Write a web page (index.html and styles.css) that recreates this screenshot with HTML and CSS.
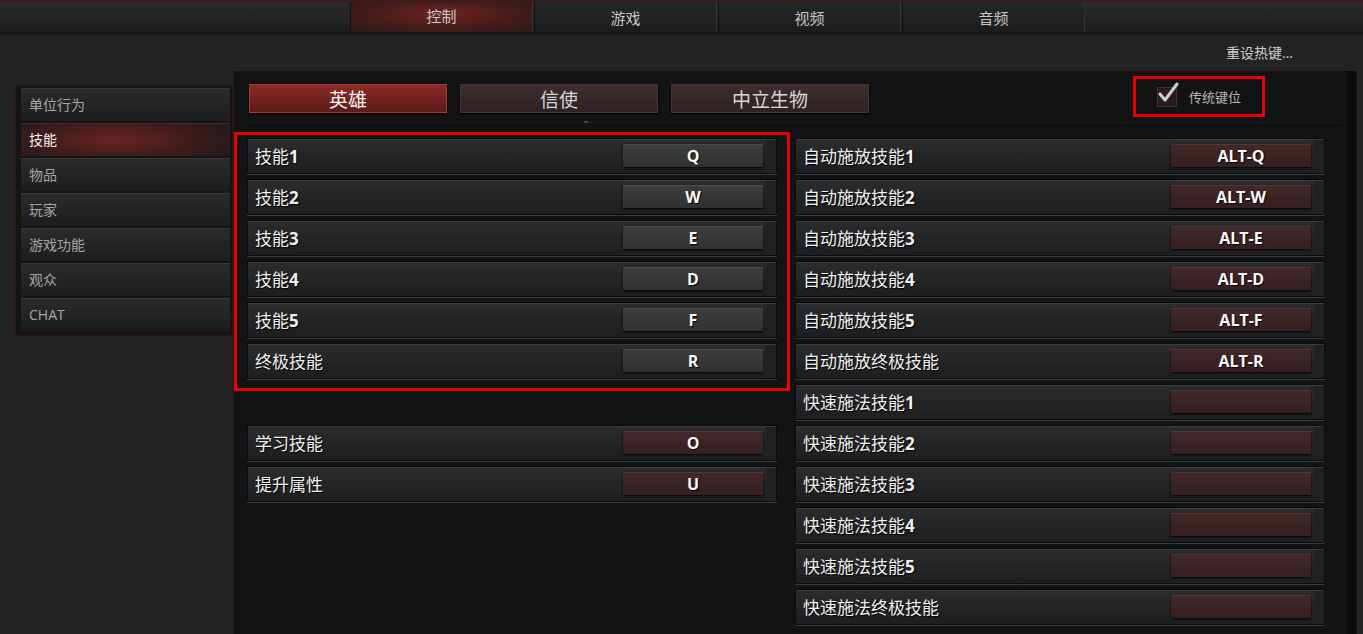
FILE: index.html
```html
<!DOCTYPE html>
<html lang="zh-CN">
<head>
    <meta charset="UTF-8">
    <link rel="stylesheet" href="styles.css">
</head>
<body>
    <div class="topbar">
        <span class="topTab active">控制</span>
        <span class="topTab">游戏</span>
        <span class="topTab">视频</span>
        <span class="topTab">音频</span>
    </div>

    <div class="resetRow">
        <span class="reset">重设热键...</span>
    </div>

    <div class="content">
        <div class="sidebar">
            <a href="#">单位行为</a>
            <a href="#" class="active">技能</a>
            <a href="#">物品</a>
            <a href="#">玩家</a>
            <a href="#">游戏功能</a>
            <a href="#">观众</a>
            <a href="#">CHAT</a>
        </div>

        <div class="panel">
            <div class="subTabs">
                <span class="subTab active">英雄</span>
                <span class="subTab">信使</span>
                <span class="subTab">中立生物</span>

                <div class="legacy">
                    <span class="checkBox">
                        <svg width="26" height="26" viewBox="0 0 26 26">
                            <path d="M5 14 L10 20 L22 4" fill="none" stroke="#cfcfcf" stroke-width="3" stroke-linecap="round" stroke-linejoin="round"/>
                        </svg>
                    </span>
                    <span>传统键位</span>
                </div>
            </div>

            <div class="separator"><i></i></div>

            <div class="columns">
                <div class="column">
                    <div class="highlight">
                        <div class="row"><span class="label">技能<b>1</b></span><span class="key">Q</span></div>
                        <div class="row"><span class="label">技能<b>2</b></span><span class="key">W</span></div>
                        <div class="row"><span class="label">技能<b>3</b></span><span class="key">E</span></div>
                        <div class="row"><span class="label">技能<b>4</b></span><span class="key">D</span></div>
                        <div class="row"><span class="label">技能<b>5</b></span><span class="key">F</span></div>
                        <div class="row"><span class="label">终极技能</span><span class="key">R</span></div>
                    </div>

                    <div class="group">
                        <div class="row"><span class="label">学习技能</span><span class="key red">O</span></div>
                        <div class="row"><span class="label">提升属性</span><span class="key red">U</span></div>
                    </div>
                </div>

                <div class="column">
                    <div class="row"><span class="label">自动施放技能<b>1</b></span><span class="key red">ALT-Q</span></div>
                    <div class="row"><span class="label">自动施放技能<b>2</b></span><span class="key red">ALT-W</span></div>
                    <div class="row"><span class="label">自动施放技能<b>3</b></span><span class="key red">ALT-E</span></div>
                    <div class="row"><span class="label">自动施放技能<b>4</b></span><span class="key red">ALT-D</span></div>
                    <div class="row"><span class="label">自动施放技能<b>5</b></span><span class="key red">ALT-F</span></div>
                    <div class="row"><span class="label">自动施放终极技能</span><span class="key red">ALT-R</span></div>
                    <div class="row"><span class="label">快速施法技能<b>1</b></span><span class="key red"></span></div>
                    <div class="row"><span class="label">快速施法技能<b>2</b></span><span class="key red"></span></div>
                    <div class="row"><span class="label">快速施法技能<b>3</b></span><span class="key red"></span></div>
                    <div class="row"><span class="label">快速施法技能<b>4</b></span><span class="key red"></span></div>
                    <div class="row"><span class="label">快速施法技能<b>5</b></span><span class="key red"></span></div>
                    <div class="row"><span class="label">快速施法终极技能</span><span class="key red"></span></div>
                </div>
            </div>

            <div class="scrollTrack"></div>
        </div>
    </div>
</body>
</html>
```

FILE: styles.css
```css
*{
    padding: 0;
    margin: 0;
    box-sizing: border-box;
}

body{
    width: 1363px;
    height: 634px;
    overflow: hidden;
    background-color: #232323;
    font-family: "Open Sans", "Noto Sans CJK SC", sans-serif;
    color: #ccc;
}

/* 顶部标签 */
.topbar{
    height: 32px;
    display: flex;
    padding-left: 350px;
    gap: 1px;
    border-top: 2px solid #3a1c1c;
    background: linear-gradient(#2b2b2b, #1d1d1d);
    box-shadow: 0 2px 2px #111;
}
.topTab{
    width: 183px;
    display: flex;
    align-items: center;
    justify-content: center;
    font-size: 15px;
    color: #c8c8c8;
    background: linear-gradient(#262728, #1b1c1d);
    border-left: 1px solid #111;
    border-right: 1px solid #333;
}
.topTab.active{
    background: radial-gradient(ellipse at 50% 40%, #6e2420 0%, #4a1c1a 50%, #2a1a1a 100%);
    padding-bottom: 4px;
}

.resetRow{
    height: 38px;
    display: flex;
    justify-content: flex-end;
    padding-right: 70px;
    padding-top: 10px;
}
.reset{
    font-size: 14px;
    color: #cfcfcf;
}

.content{
    display: flex;
}

/* 左侧菜单 */
.sidebar{
    width: 218px;
    margin-left: 15px;
    margin-top: 15px;
    height: 251px;
    padding: 2px 2px 2px 5px;
    background-color: #141414;
    border: 1px solid #2e1414;
    display: flex;
    flex-direction: column;
    gap: 2px;
}
.sidebar a{
    display: block;
    height: 33px;
    line-height: 32px;
    padding-left: 8px;
    text-decoration: none;
    font-size: 14px;
    color: #a6a6a6;
    background: linear-gradient(#2a2b2c, #1c1d1e);
    border-top: 1px solid #38393a;
}
.sidebar a.active{
    color: #f2f2f2;
    background: radial-gradient(ellipse 60% 90% at 45% 50%, #6a2421 0%, #3e1c1b 60%, #261a1a 100%);
    border-top-color: #4a2a2a;
}

/* 主面板 */
.panel{
    position: relative;
    width: 1125px;
    height: 564px;
    background-color: #121314;
    border-top: 1px solid #3a1818;
    border-left: 1px solid #2a1414;
    border-right: 1px solid #2a2a2a;
    padding-left: 13px;
}

.subTabs{
    display: flex;
    align-items: center;
    gap: 13px;
    margin-top: 13px;
    height: 29px;
    padding-left: 2px;
}
.subTab{
    width: 198px;
    height: 29px;
    display: flex;
    align-items: center;
    justify-content: center;
    font-size: 19px;
    color: #d6d6d6;
    background: linear-gradient(#3e2d2d, #2d2222);
    border: 1px solid #4a3434;
    box-shadow: 0 1px 2px #000;
}
.subTab.active{
    color: #f4f4f4;
    background: linear-gradient(#8c2a26, #5c1b19);
    border-color: #a03a34;
}

.legacy{
    margin-left: auto;
    margin-right: 92px;
    width: 132px;
    height: 41px;
    margin-top: -4px;
    border: 3px solid #e60000;
    display: flex;
    align-items: center;
    padding-left: 21px;
    gap: 12px;
    font-size: 13px;
    color: #b8b8b8;
}
.checkBox{
    position: relative;
    width: 20px;
    height: 20px;
    background-color: #2a1c1c;
    border: 1px solid #4e2c2c;
}
.checkBox svg{
    position: absolute;
    left: -3px;
    top: -8px;
}

.separator{
    position: relative;
    height: 1px;
    margin: 9px 14px 15px 0;
    background-color: #1c1d1e;
}
.separator i{
    position: absolute;
    left: 337px;
    top: -1px;
    width: 4px;
    height: 2px;
    background-color: #444;
}

.columns{
    display: flex;
    gap: 18px;
}
.column{
    width: 530px;
    display: flex;
    flex-direction: column;
    gap: 5px;
}

.highlight{
    width: 556px;
    margin: -6px 0 0 -13px;
    padding: 3px 10px 9px 10px;
    border: 3px solid #e60000;
    display: flex;
    flex-direction: column;
    gap: 5px;
}
.group{
    margin-top: 29px;
    display: flex;
    flex-direction: column;
    gap: 5px;
}

.row{
    height: 36px;
    display: flex;
    align-items: center;
    justify-content: space-between;
    padding-left: 7px;
    padding-right: 13px;
    padding-bottom: 1px;
    background: linear-gradient(#2b2c2e, #1d1e20);
    border: 1px solid #0b0b0c;
    box-shadow: inset 0 1px 0 #3c3d3f, inset -10px 0 0 #202122, 0 1px 0 #3a3b3c;
}
.label{
    font-size: 17px;
    color: #f0f0f0;
    text-shadow: 1px 1px 1px #000;
}
.label b{
    font-weight: 700;
}
.key{
    width: 140px;
    height: 23px;
    display: flex;
    align-items: center;
    justify-content: center;
    font-size: 16px;
    font-weight: 700;
    color: #fafafa;
    text-shadow: 1px 1px 1px #000;
    background: linear-gradient(#3c3d3d, #303131);
    box-shadow: 0 1px 2px #000, inset 0 1px 0 #4a4b4b;
}
.key.red{
    background: linear-gradient(#432829, #351f20);
    box-shadow: 0 1px 2px #000, inset 0 1px 0 #553536;
}

.scrollTrack{
    position: absolute;
    right: 0;
    top: 0;
    width: 11px;
    height: 100%;
    background-color: #0c0c0d;
}
```
